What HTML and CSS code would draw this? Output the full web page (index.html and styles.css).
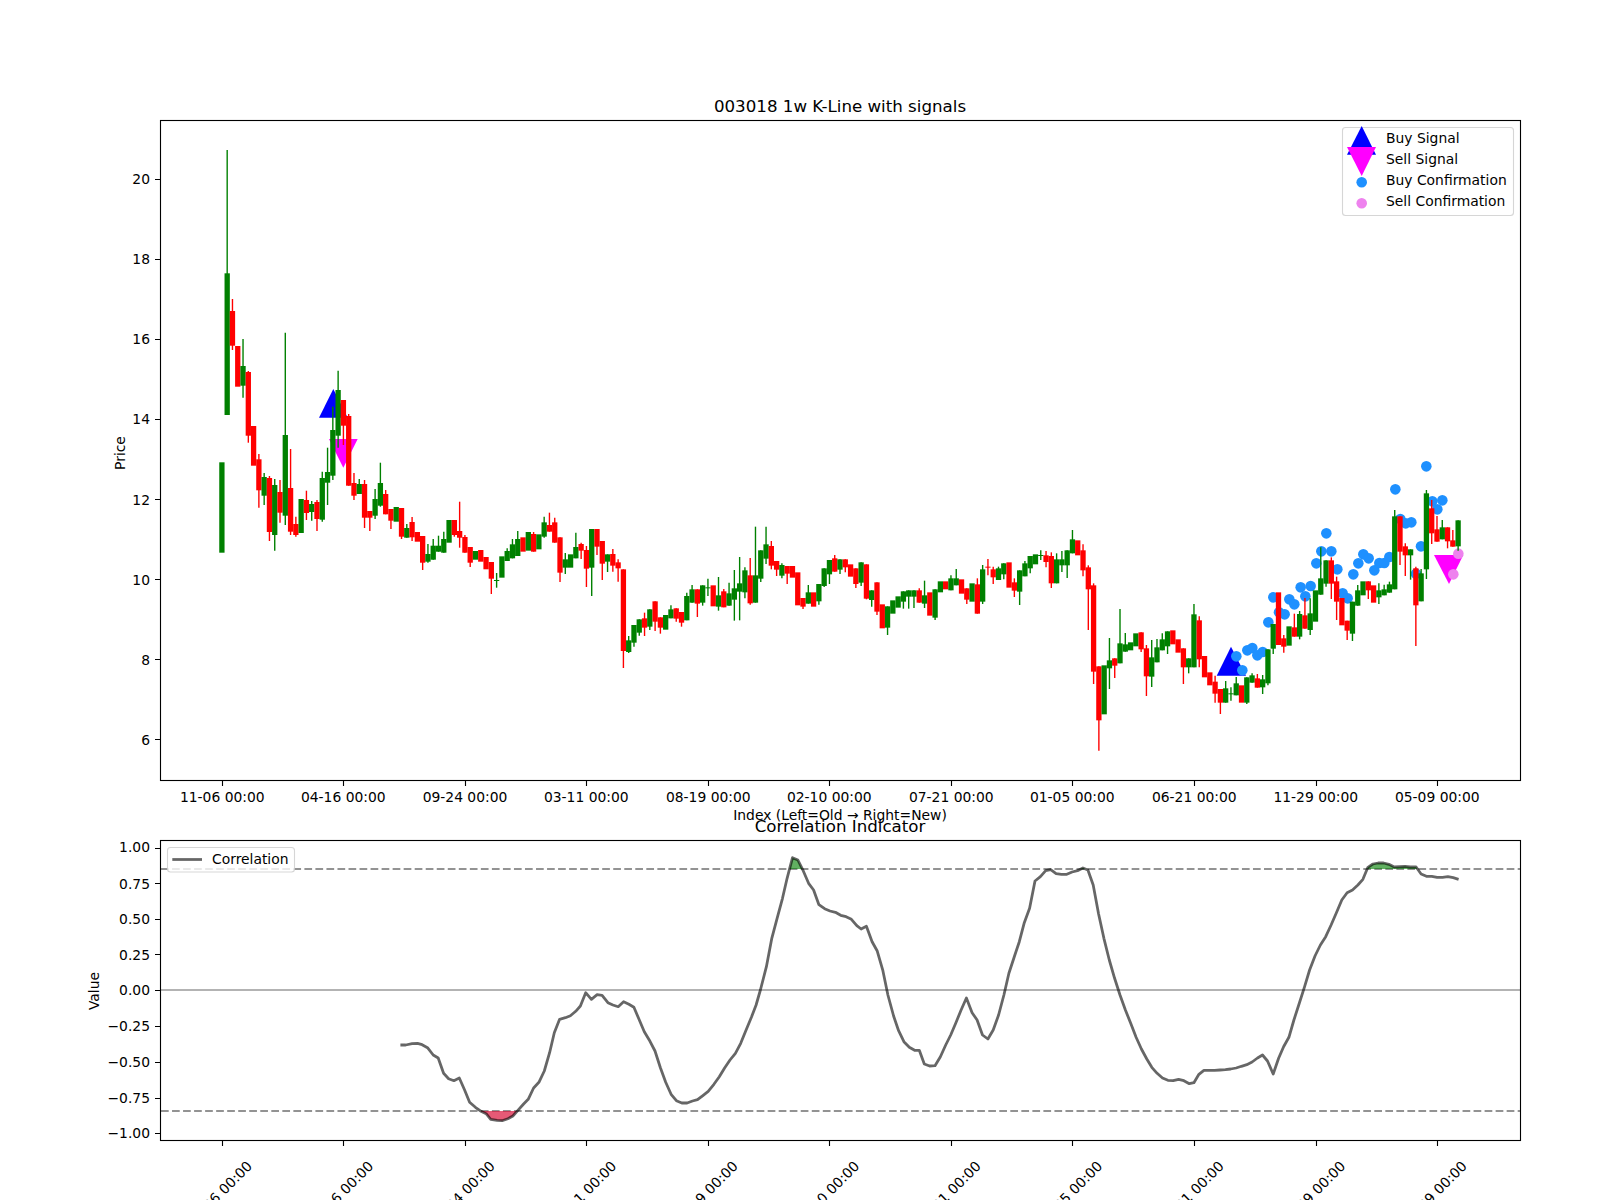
FILE: index.html
```html
<!DOCTYPE html>
<html lang="en">
<head>
<meta charset="utf-8">
<title>003018 1w K-Line with signals</title>
<link rel="stylesheet" href="styles.css">
</head>
<body>
<svg class="figure" width="1600" height="1200" viewBox="0 0 1600 1200" xmlns="http://www.w3.org/2000/svg">
  <!-- price panel -->
  <polygon class="buy" points="319,417.7 333.3,389 347.7,417.7"/>
  <polygon class="buy" points="1216.7,675.7 1231,646.7 1246,675.7"/>
  <polygon class="sell" points="329,439 357.7,439 343.3,467.7"/>
  <polygon class="sell" points="1434,555 1463.3,555 1449,584"/>
  <g id="dots"></g>
  <g id="candles"></g>
  <rect class="spine" x="160.5" y="120.5" width="1360" height="660"/>
  <path class="tick" d="M222.5 781v5M343.5 781v5M465.5 781v5M586.5 781v5M708.5 781v5M829.5 781v5M951.5 781v5M1072.5 781v5M1194.5 781v5M1316.5 781v5M1437.5 781v5"/>
  <path class="tick" d="M160 179.5h-5M160 259.5h-5M160 339.5h-5M160 419.5h-5M160 499.5h-5M160 579.5h-5M160 659.5h-5M160 739.5h-5"/>
  <text class="title" x="840" y="112">003018 1w K-Line with signals</text>
  <g class="end">
    <text x="150" y="184">20</text><text x="150" y="264">18</text><text x="150" y="344">16</text><text x="150" y="424">14</text>
    <text x="150" y="504.5">12</text><text x="150" y="584.5">10</text><text x="150" y="664.5">8</text><text x="150" y="744.5">6</text>
  </g>
  <g class="mid">
    <text x="222.3" y="802">11-06 00:00</text><text x="343.3" y="802">04-16 00:00</text><text x="465" y="802">09-24 00:00</text>
    <text x="586.3" y="802">03-11 00:00</text><text x="708.3" y="802">08-19 00:00</text><text x="829.3" y="802">02-10 00:00</text>
    <text x="951.3" y="802">07-21 00:00</text><text x="1072.3" y="802">01-05 00:00</text><text x="1194.3" y="802">06-21 00:00</text>
    <text x="1315.8" y="802">11-29 00:00</text><text x="1437.3" y="802">05-09 00:00</text>
    <text x="840" y="820">Index (Left=Old → Right=New)</text>
    <text transform="rotate(-90 125 453)" x="125" y="453">Price</text>
    <text transform="rotate(-90 99 991)" x="99" y="991">Value</text>
  </g>
  <!-- price legend -->
  <rect class="legend" x="1342.5" y="127.5" width="171" height="88" rx="3"/>
  <polygon class="buy" points="1347,154.7 1361.7,126 1376,154.7"/>
  <polygon class="sell" points="1347,147 1376,147 1361.7,176"/>
  <circle class="dot-buy" cx="1361.7" cy="182.3" r="5.3"/>
  <circle class="dot-sell" cx="1361.7" cy="203.3" r="5.3"/>
  <g class="start">
    <text x="1386" y="143">Buy Signal</text>
    <text x="1386" y="164">Sell Signal</text>
    <text x="1386" y="185">Buy Confirmation</text>
    <text x="1386" y="206">Sell Confirmation</text>
  </g>

  <!-- correlation panel -->
  <line class="hline" x1="161" y1="869" x2="1520" y2="869"/>
  <line class="hline" x1="161" y1="1111" x2="1520" y2="1111"/>
  <line class="zero" x1="161" y1="990" x2="1520" y2="990"/>
  <clipPath id="above"><rect x="161" y="841" width="1359" height="28"/></clipPath>
  <clipPath id="below"><rect x="161" y="1111" width="1359" height="28"/></clipPath>
  <path id="fill-high" class="fill-high" clip-path="url(#above)"/>
  <path id="fill-low" class="fill-low" clip-path="url(#below)"/>
  <path id="corr" class="corr"/>
  <rect class="spine" x="160.5" y="840.5" width="1360" height="300"/>
  <path class="tick" d="M222.5 1141v5M343.5 1141v5M465.5 1141v5M586.5 1141v5M708.5 1141v5M829.5 1141v5M951.5 1141v5M1072.5 1141v5M1194.5 1141v5M1316.5 1141v5M1437.5 1141v5"/>
  <path class="tick" d="M160 848.5h-5M160 883.5h-5M160 919.5h-5M160 954.5h-5M160 990.5h-5M160 1026.5h-5M160 1062.5h-5M160 1098.5h-5M160 1133.5h-5"/>
  <text class="title" x="840" y="832">Correlation Indicator</text>
  <g class="end">
    <text x="150" y="852">1.00</text><text x="150" y="888.5">0.75</text><text x="150" y="923.5">0.50</text>
    <text x="150" y="959.5">0.25</text><text x="150" y="995">0.00</text><text x="150" y="1030.5">−0.25</text>
    <text x="150" y="1066.5">−0.50</text><text x="150" y="1102.5">−0.75</text><text x="150" y="1138">−1.00</text>
    <text transform="rotate(-45 253 1167)" x="253" y="1167">11-06 00:00</text>
    <text transform="rotate(-45 374.3 1167)" x="374.3" y="1167">04-16 00:00</text>
    <text transform="rotate(-45 495.8 1167)" x="495.8" y="1167">09-24 00:00</text>
    <text transform="rotate(-45 617.3 1167)" x="617.3" y="1167">03-11 00:00</text>
    <text transform="rotate(-45 738.8 1167)" x="738.8" y="1167">08-19 00:00</text>
    <text transform="rotate(-45 860.3 1167)" x="860.3" y="1167">02-10 00:00</text>
    <text transform="rotate(-45 981.8 1167)" x="981.8" y="1167">07-21 00:00</text>
    <text transform="rotate(-45 1103.3 1167)" x="1103.3" y="1167">01-05 00:00</text>
    <text transform="rotate(-45 1224.8 1167)" x="1224.8" y="1167">06-21 00:00</text>
    <text transform="rotate(-45 1346.3 1167)" x="1346.3" y="1167">11-29 00:00</text>
    <text transform="rotate(-45 1467.8 1167)" x="1467.8" y="1167">05-09 00:00</text>
  </g>
  <rect class="legend" x="167.5" y="847.5" width="127" height="24.5" rx="3"/>
  <line class="corr" x1="172.3" y1="859.5" x2="202" y2="859.5"/>
  <text class="start" x="212" y="864">Correlation</text>
</svg>
<script src="script.js"></script>
</body>
</html>
```
FILE: styles.css
```css
html, body { margin: 0; padding: 0; background: #fff; }
.figure { display: block; font-family: "DejaVu Sans", sans-serif; font-size: 13.89px; fill: #000; }
.title { font-size: 16.67px; text-anchor: middle; }
.end text { text-anchor: end; }
.mid text { text-anchor: middle; }
.start, .start text { text-anchor: start; }
.spine { fill: none; stroke: #000; stroke-width: 1.11; }
.tick { fill: none; stroke: #000; stroke-width: 1.11; }
.buy { fill: #0000ff; }
.sell { fill: #ff00ff; }
.dot-buy { fill: #1e90ff; }
.dot-sell { fill: #ee82ee; }
.legend { fill: rgba(255,255,255,.8); stroke: rgba(204,204,204,.8); stroke-width: 1.11; }
.hline { stroke: #808080; stroke-opacity: .85; stroke-width: 2.08; stroke-dasharray: 7.7 3.33; }
.zero { stroke: #808080; stroke-opacity: .6; stroke-width: 2.08; }
.corr { fill: none; stroke: rgba(0,0,0,.6); stroke-width: 2.78; stroke-linejoin: round; }
.fill-high { fill: rgba(0,128,0,.62); }
.fill-low { fill: rgba(220,20,60,.7); }
.wick-g { stroke: #008000; stroke-width: 1.39; }
.wick-r { stroke: #ff0000; stroke-width: 1.39; }
.body-g { fill: #008000; }
.body-r { fill: #ff0000; }
```
FILE: script.js
```js
// Each candle: colour, body top, body bottom, wick top, wick bottom (0 = no wick on that side).
// Rows of a block are y values measured as y0 + value / k.
var NS = 'http://www.w3.org/2000/svg';
var X0 = 221.9, STEP = 5.283, BODY = 5.3;

var blocks = [
  { y0: 0, k: 1, rows: [
    ['g',462.3,552.7],['g',273.3,415,150,0],['r',311,345.7,299,350],['r',346,386.7],['g',366,385.7,339,397.7],
    ['r',372,435.7,371,442.7],['r',426,465.7],['r',459.3,490.3,454,507.7],['g',477,495.7,473,505],['r',478,532,476,541],
    ['g',485,535,479,550.7],['r',492,512.7,480,522.7],['g',435,515.7,332.7,525],['r',488,531.7,449,535],['r',524,535,516.7,536.7],
    ['g',499,533],['r',500,513,490.7,520],['g',504,512,501,520.7],['r',502,519,500,531],['g',478,519.7,471.7,521.7],
    ['g',472,482.7,447.7,505],['g',430,475.7,406.7,480],['g',390,435.7,370.7,447.7],['r',400,425.7,0,445],['r',416,485.7,414,0],
    ['r',483,495.7,473,500],['g',484,494,479,0],['r',484,517.7,480,528],['r',511,517.7,0,531],['g',499,515.7,489,519],
    ['g',483,505.7,462.7,506.7],['r',494,514.3,490,0],['r',509,520.7,0,529],['g',507,521.7],['r',508,536.7,0,539],
    ['g',528,537.7,524,0],['r',522,537.3,517,541],['r',532,541.7],['r',536,562.7,0,570],['g',554,561.7,544,562.7],
    ['g',545.7,559.7,539,0],['g',545.7,551.7,535.7,0],['g',539,552.7,531.7,0],['g',520,542.7],['r',520,535,0,536.7],
    ['r',531,537.7,501.7,547.7],['r',537,552.7,535,0],['r',547,562.7,0,567],['g',551,559.7],['r',550,561.7],
    ['r',557,569.3],['r',562,578.7,0,594],['g',580,580.5,573,587.7]
  ]},
  { y0: 480, k: 3, rows: [
    ['g',229,293],['g',213,243,205,0],['g',193,235,177,0],['g',177,228,153,0],['r',172,215],['g',156,212],['r',162,215,156,0],
    ['g',163,208],['g',127,170,110,173],['r',135,155,98,0],['r',127,188,113,0],['r',172,278,0,306],['g',238,263,219,282],
    ['g',223,263],['g',201,235,158,0],['r',192,212,188,237],['r',210,266,198,321],['g',147,263,147,348],['r',147,200,0,225],
    ['r',183,251,0,300],['g',223,245,0,276],['r',222,257,207,275],['r',247,265,238,305],['r',268,513,0,564],['g',481,516,468,519],
    ['g',435,488,0,500],['g',418,458,0,467],['r',415,443,398,468],['g',388,440,0,450],['r',364,425,0,453],['r',412,443,0,461],
    ['g',405,449],['g',388,415,376,0],['r',385,416,0,425],['r',396,428,0,440],['g',348,421,338,0],['g',328,368,315,0],
    ['r',328,371,0,411],['g',316,368,0,377],['g',322,323,296,348],['r',316,379],['g',346,380,291,392],['r',334,382,327,0],
    ['g',340,377,308,0],['g',325,359,270,422],['g',310,335,231,421],['g',271,337,262,355],['r',286,370,234,374],['g',286,368,140,0],
    ['g',211,296,0,306],['g',193,236,140,252],['r',198,257,183,268],['r',243,269,0,288],['g',255,287,250,295],['r',258,281,0,312],
    ['r',258,293],['r',277,376],['r',354,380,0,387],['g',337,371,315,0],['r',337,380],['g',312,364,0,374],['g',265,318,0,321],
    ['g',240,283,0,312],['r',235,275,225,0],['g',238,269,0,282],['r',238,262,0,277],['r',253,290],['r',265,312,0,324],
    ['g',247,308,0,318],['r',253,356,0,358],['g',331,360,0,380],['r',307,395,0,405],['r',373,445],['g',379,443,0,465],
    ['g',361,401],['g',349,383]
  ]},
  { y0: 500, k: 3, rows: [
    ['g',274,305,0,326],['g',271,290,0,326],['g',271,290,0,324],['r',271,308,265,0],['g',286,311,242,324],['r',277,347],
    ['g',268,353,0,360],['g',244,277],['r',244,268],['g',235,271,226,0],['g',235,256,207,0],['r',238,281],['r',265,299,0,312],
    ['g',250,305],['r',253,341,235,0],['g',208,305,195,312],['r',200,201,177,226],['r',208,232,200,252],['g',205,240,200,0],
    ['g',190,223,0,238],['r',187,263],['r',247,272,235,291],['g',211,275,0,315],['g',190,229,183,0],['g',168,205,0,220],
    ['g',163,193],['g',165,166,151,180],['r',166,186,153,202],['r',168,250,157,264],['g',178,250,160,0],['g',178,196,153,216],
    ['g',151,196,0,234],['g',118,160,90,0],['r',121,166],['r',151,211,133,229],['r',202,268,196,390],['r',256,515,250,552],
    ['r',499,661,0,752],['g',496,643],['g',481,505,414,567],['r',475,497,0,534],['g',430,490,327,0],['g',433,455,399,0],
    ['g',427,451],['g',400,439],['r',397,448,0,456],['r',445,529,435,588],['g',472,530,420,561],['g',442,487,417,0],
    ['g',418,451,400,0],['g',394,439,0,462],['r',391,433],['r',418,458],['r',445,502,0,552],['g',475,502,0,520],
    ['g',343,502,312,0],['r',361,478,349,502],['r',468,532],['r',517,556],['r',545,581,527,608],['r',567,608,0,642],
    ['g',565,608,543,0],['g',580,581,562,602],['g',550,586,531,0],['r',556,608],['g',532,608,0,612]
  ]},
  { y0: 450, k: 3, rows: [
    ['g',676,698,670,0],['r',685,713,672,0],['g',688,712,675,732],['g',598,700,0,706],['g',522,596,0,612],['r',427,585],
    ['r',565,590,555,608],['g',529,587],['r',532,560,491,0],['g',492,560,483,568],['r',496,536,444,0],['g',490,540,445,555],
    ['g',421,515],['g',385,434,292,0],['g',331,401,0,410],['r',331,401,322,447],['r',394,455,380,510],['r',444,526],
    ['r',512,542,0,570],['g',455,551,0,573],['g',421,467,405,0],['g',394,436],['r',394,421,0,447],['r',406,458],
    ['g',421,442,400,462],['g',418,436,404,0],['g',403,428,395,0],['g',199,418,180,0],['r',199,305,0,345],['r',289,316,280,378],
    ['g',298,316,0,389],['r',355,466,350,588],['g',370,454,357,0],['g',130,358,120,387],['r',175,250,150,282],['r',238,275,198,0],
    ['g',232,268,210,0],['r',232,274,0,295],['r',271,290,240,0],['g',211,289,0,302]
  ]}
];

function el(name, attrs, parent) {
  var n = document.createElementNS(NS, name);
  for (var a in attrs) n.setAttribute(a, attrs[a]);
  parent.appendChild(n);
  return n;
}

// candles
var candles = document.getElementById('candles');
var index = 0;
blocks.forEach(function (b) {
  b.rows.forEach(function (r) {
    var x = X0 + STEP * index;
    var top = b.y0 + r[1] / b.k, bot = b.y0 + r[2] / b.k;
    var wt = r[3] ? b.y0 + r[3] / b.k : top, wb = r[4] ? b.y0 + r[4] / b.k : bot;
    if (wt < top || wb > bot) {
      el('line', { x1: x, x2: x, y1: wt, y2: wb, 'class': 'wick-' + r[0] }, candles);
    }
    el('rect', { x: x - BODY / 2, y: top, width: BODY, height: Math.max(bot - top, 1), 'class': 'body-' + r[0] }, candles);
    index++;
  });
});

// confirmation dots, measured as x = 1200 + X / 3, y = 450 + Y / 3
var dots = document.getElementById('dots');
[[109,619],[127,661],[142,601],[157,594],[172,616],[188,606],[205,517],[220,442],[237,487],[254,493],[268,448],[283,463],
 [302,412],[316,439],[332,408],[349,340],[364,304],[379,250],[394,304],[412,358],[428,430],[443,445],[460,373],[475,340],
 [490,313],[506,325],[523,361],[538,339],[553,339],[568,321],[586,118],[601,207],[617,220],[634,217],[648,371],[663,289],
 [679,49],[697,154],[712,178],[727,151]].forEach(function (p) {
  el('circle', { cx: 1200 + p[0] / 3, cy: 450 + p[1] / 3, r: 5.3, 'class': 'dot-buy' }, dots);
});
[[775,311],[760,373]].forEach(function (p) {
  el('circle', { cx: 1200 + p[0] / 3, cy: 450 + p[1] / 3, r: 5.3, 'class': 'dot-sell' }, dots);
});

// correlation line: x = x0 + X / 2.8, y = 840 + Y / 3
var partA = [[57,615],[72,615],[90,611],[105,610],[118,614],[133,623],[149,645],[163,654],[178,700],[192,716],[207,722],[222,714],
 [237,750],[251,787],[267,802],[283,814],[297,821],[310,838],[328,841],[342,842],[358,836],[372,828],[386,811],[402,792],[415,778],
 [430,744],[445,727],[460,693],[475,638],[488,578],[503,538],[519,533],[533,527],[548,514],[561,498],[576,458],[592,478],[608,464],
 [622,466],[638,488],[652,495],[667,500],[682,485],[697,493],[711,502],[725,537],[740,575],[756,604],[770,633],[785,683],[800,727],
 [815,763],[830,782],[845,789],[860,789],[875,783],[889,779],[905,766],[919,754],[935,733],[950,710],[965,684],[980,660],[995,640],
 [1010,610],[1025,570],[1040,532],[1053,495],[1065,450],[1082,380],[1097,295],[1112,235],[1127,175],[1140,115],[1155,53],[1170,60],
 [1185,92],[1200,130],[1214,150],[1229,194],[1245,206],[1260,213],[1275,217],[1290,226],[1305,230],[1320,238],[1335,257],[1347,267],
 [1362,259],[1378,305],[1392,332],[1408,392],[1422,465],[1438,528],[1452,572],[1467,605],[1482,622],[1497,631],[1510,631]];
var partB = [[12,672],[27,678],[42,677],[57,650],[72,615],[86,585],[100,550],[115,510],[130,474],[146,518],[160,540],[175,585],
 [190,597],[205,570],[220,525],[235,465],[249,400],[264,350],[278,305],[292,248],[307,205],[322,123],[337,110],[352,92],[366,89],
 [381,101],[396,103],[411,103],[426,96],[441,92],[456,84],[470,90],[485,135],[500,222],[515,295],[530,360],[545,415],[560,465],
 [575,510],[590,550],[605,592],[620,627],[635,657],[649,682],[664,700],[679,714],[694,721],[709,722],[724,718],[739,722],[754,731],
 [767,728],[781,703],[795,691],[810,691],[825,691],[840,690],[855,689],[870,687],[885,684],[900,679],[915,674],[930,666],[945,654],
 [959,645],[973,663],[989,702],[1004,655],[1018,620],[1033,592],[1047,540],[1062,490],[1077,440],[1091,390],[1106,348],[1121,315],
 [1136,290],[1151,255],[1166,218],[1181,180],[1196,158],[1211,150],[1226,135],[1240,118],[1254,82],[1268,72],[1283,69],[1298,69],
 [1313,73],[1328,81],[1343,80],[1358,79],[1373,81],[1389,81],[1403,102],[1418,109],[1433,109],[1448,112],[1463,112],[1478,110],
 [1493,113],[1508,118]];
function pts(list, x0) {
  return list.map(function (p) { return [(x0 + p[0] / 2.8).toFixed(1), (840 + p[1] / 3).toFixed(1)]; });
}
var line = pts(partA, 380).concat(pts(partB, 920));
var d = 'M' + line.map(function (p) { return p.join(' '); }).join('L');
document.getElementById('corr').setAttribute('d', d);
var first = line[0][0], last = line[line.length - 1][0];
document.getElementById('fill-high').setAttribute('d', d + 'L' + last + ' 869L' + first + ' 869Z');
document.getElementById('fill-low').setAttribute('d', d + 'L' + last + ' 1111L' + first + ' 1111Z');
```
